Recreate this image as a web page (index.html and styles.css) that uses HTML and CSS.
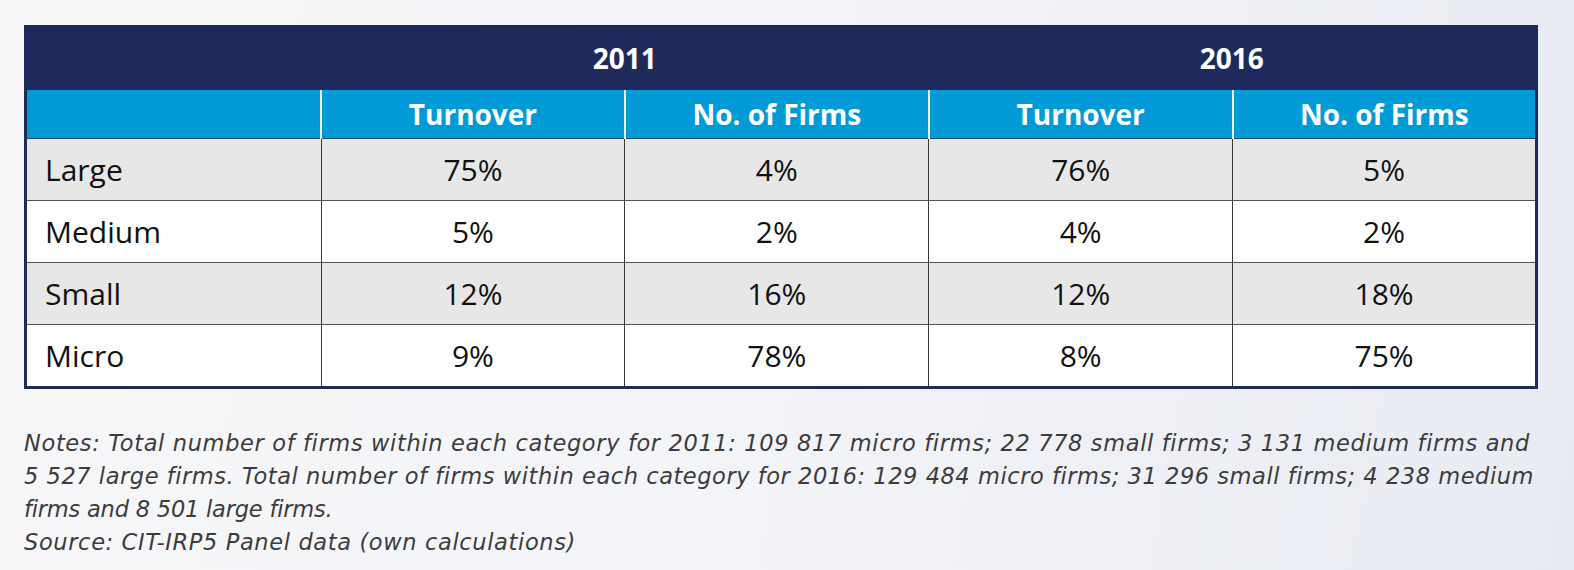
FILE: index.html
```html
<!DOCTYPE html>
<html>
<head>
<meta charset="utf-8">
<link rel="stylesheet" href="styles.css">
</head>
<body>
<div class="page">
  <table class="data">
    <thead>
      <tr class="years">
        <th class="blank"></th>
        <th colspan="2">2011</th>
        <th colspan="2">2016</th>
      </tr>
      <tr class="sub">
        <th class="blank"></th>
        <th>Turnover</th>
        <th>No. of Firms</th>
        <th>Turnover</th>
        <th>No. of Firms</th>
      </tr>
    </thead>
    <tbody>
      <tr class="shade"><td class="lbl">Large</td><td>75%</td><td>4%</td><td>76%</td><td>5%</td></tr>
      <tr><td class="lbl">Medium</td><td>5%</td><td>2%</td><td>4%</td><td>2%</td></tr>
      <tr class="shade"><td class="lbl">Small</td><td>12%</td><td>16%</td><td>12%</td><td>18%</td></tr>
      <tr><td class="lbl">Micro</td><td>9%</td><td>78%</td><td>8%</td><td>75%</td></tr>
    </tbody>
  </table>
  <div class="notes">
    <p><span class="line">Notes: Total number of firms within each category for 2011: 109&nbsp;817 micro firms; 22&nbsp;778 small firms; 3&nbsp;131 medium firms and</span> <span class="line l2">5&nbsp;527 large firms. Total number of firms within each category for 2016: 129&nbsp;484 micro firms; 31&nbsp;296 small firms; 4&nbsp;238 medium</span> <span class="line l3">firms and 8&nbsp;501 large firms.</span></p>
    <p><span class="line">Source: CIT-IRP5 Panel data (own calculations)</span></p>
  </div>
</div>
</body>
</html>
```

FILE: styles.css
```css
html, body {
  margin: 0;
  padding: 0;
}
body {
  width: 1574px;
  height: 570px;
  overflow: hidden;
  background: linear-gradient(100deg, #f7f7f9 0%, #f3f4f8 50%, #e8ebf2 100%);
  font-family: "Open Sans", "Liberation Sans", sans-serif;
}
.page {
  padding: 25px 36px 0 24px;
}
.data {
  width: 1514px;
  border-collapse: collapse;
  table-layout: fixed;
  border-left: 3px solid #1f2a5c;
  border-right: 3px solid #1f2a5c;
  border-bottom: 3px solid #1f2a5c;
}
.data th {
  color: #ffffff;
  font-weight: 700;
  font-size: 28px;
  text-align: center;
  padding: 0;
}
.years th {
  background: #1f2a5c;
  height: 65px;
}
.sub th {
  background: #009bd6;
  height: 48px;
  border-left: 2px solid #e6f3fa;
  border-bottom: 1px solid #2a4a6a;
}
.sub th.blank {
  border-left: none;
}
.data td {
  height: 61px;
  padding: 0;
  font-size: 30px;
  text-align: center;
  color: #111;
  border-left: 1.5px solid #3a3a3a;
  border-bottom: 1.5px solid #555;
}
.data td.lbl {
  text-align: left;
  padding-left: 18px;
  border-left: none;
}
.data tr:last-child td {
  border-bottom: none;
}
.shade td {
  background: #e7e7e7;
}
.data tbody tr:not(.shade) td {
  background: #ffffff;
}
.data th.blank {
  width: 294px;
}
.notes {
  margin-top: 38px;
  color: #3c3c3c;
  font-family: "DejaVu Sans", "Open Sans", sans-serif;
  font-style: italic;
  font-size: 22.5px;
  letter-spacing: 0.64px;
  line-height: 33px;
  width: 1540px;
}
.notes p {
  margin: 0;
}
.notes .line {
  display: block;
  white-space: nowrap;
}
.notes .l2 {
  letter-spacing: 0.55px;
}
.notes .l3 {
  letter-spacing: -0.2px;
}
```
